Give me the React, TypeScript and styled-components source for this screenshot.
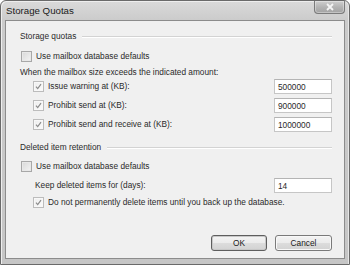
import React from "react";
import styled, { createGlobalStyle } from "styled-components";

const Global = createGlobalStyle`
  html, body { margin: 0; padding: 0; background: #ffffff; }
  body { font-family: "Liberation Sans", Arial, sans-serif; }
`;

const Window = styled.div`
  width: 350px;
  height: 265px;
  box-sizing: border-box;
  display: flex;
  flex-direction: column;
  border: 1px solid #6a6a6a;
  border-radius: 6px 6px 0 0;
  background: linear-gradient(to bottom, #dadada 0px, #cbcbcb 20px, #c6c6c6 100%);
  box-shadow: inset 1px 1px 0 #eeeeee, inset -1px 0 0 #e6e6e6;
  overflow: hidden;
`;

const TitleBar = styled.div`
  height: 19px;
  display: flex;
  align-items: flex-start;
  justify-content: space-between;
  padding: 0 4px 0 5px;
`;

const Title = styled.div`
  font-size: 9.7px;
  color: #1a1a1a;
  line-height: 19px;
`;

const CloseButton = styled.div`
  width: 31px;
  height: 13px;
  box-sizing: border-box;
  border: 1px solid #7a7a7a;
  border-top: none;
  border-radius: 0 0 4px 4px;
  background: linear-gradient(to bottom, #cfcfcf 0%, #b4b4b4 50%, #a2a2a2 100%);
  box-shadow: inset 0 0 0 1px rgba(255, 255, 255, 0.35);
  display: flex;
  align-items: center;
  justify-content: center;
`;

const Client = styled.div`
  flex: 1;
  margin: 0 4px 5px 4px;
  border: 1px solid #8c8c8c;
  background: #f0f0f0;
  display: flex;
  flex-direction: column;
  padding: 9px 12px 7px 14px;
  color: #2a2a2a;
  font-size: 8.3px;
`;

const Row = styled.div<{ $mt: number; $h: number; $indent?: number }>`
  display: flex;
  align-items: center;
  height: ${(p) => p.$h}px;
  margin-top: ${(p) => p.$mt}px;
  padding-left: ${(p) => p.$indent ?? 0}px;
  white-space: nowrap;
`;

const GroupHeader = styled(Row)`
  gap: 6px;
  &::after {
    content: "";
    flex: 1;
    height: 1px;
    background: #d3d3d3;
    box-shadow: 0 1px 0 #ffffff;
  }
`;

const Label = styled.span`
  line-height: 1;
`;

const Spacer = styled.div`
  flex: 1;
`;

const Box = styled.div<{ $checked?: boolean }>`
  width: 11px;
  height: 11px;
  box-sizing: border-box;
  flex: none;
  margin-right: 4px;
  border: 1px solid ${(p) => (p.$checked ? "#bcbcbc" : "#a8a8a8")};
  background: ${(p) =>
    p.$checked
      ? "linear-gradient(to bottom right, #eeeeee, #fbfbfb)"
      : "linear-gradient(to bottom right, #d8d8d8, #f4f4f4)"};
  box-shadow: inset 0 0 0 1px ${(p) => (p.$checked ? "#f8f8f8" : "#e8e8e8")};
  display: flex;
  align-items: center;
  justify-content: center;
`;

const TextBox = styled.div`
  width: 58px;
  height: 15px;
  box-sizing: border-box;
  border: 1px solid #c6c6c6;
  border-top-color: #b4b4b4;
  background: #ffffff;
  padding-left: 3px;
  display: flex;
  align-items: center;
  font-size: 8.3px;
  color: #2a2a2a;
`;

const Footer = styled.div`
  margin-top: auto;
  display: flex;
  justify-content: flex-end;
  gap: 8px;
`;

const Button = styled.div<{ $default?: boolean }>`
  width: ${(p) => (p.$default ? 56 : 57)}px;
  height: 16px;
  box-sizing: border-box;
  border: 1px solid ${(p) => (p.$default ? "#5e5e5e" : "#7a7a7a")};
  border-radius: 3px;
  background: linear-gradient(to bottom, #f4f4f4 0%, #ebebeb 48%, #dcdcdc 52%, #d2d2d2 100%);
  box-shadow: inset 0 0 0 1px ${(p) => (p.$default ? "#c8c8c8" : "#f8f8f8")};
  display: flex;
  align-items: center;
  justify-content: center;
  font-size: 8.3px;
  color: #1a1a1a;
`;

const Check = () => (
  <svg width="9" height="9" viewBox="0 0 9 9">
    <path d="M2 4.6 L3.7 6.6 L7 2.2" fill="none" stroke="#8c8c8c" strokeWidth="1.2" />
  </svg>
);

const CheckBox = ({ checked }: { checked?: boolean }) => (
  <Box $checked={checked}>{checked ? <Check /> : null}</Box>
);

const CloseX = () => (
  <svg width="10" height="8" viewBox="0 0 10 8">
    <path d="M2 1 L8 7 M8 1 L2 7" stroke="#f4f4f4" strokeWidth="1.8" />
  </svg>
);

const quotaRows = [
  { label: "Issue warning at (KB):", value: "500000", mt: 1 },
  { label: "Prohibit send at (KB):", value: "900000", mt: 4 },
  { label: "Prohibit send and receive at (KB):", value: "1000000", mt: 4 },
];

export default function App() {
  return (
    <>
      <Global />
      <Window>
        <TitleBar>
          <Title>Storage Quotas</Title>
          <CloseButton>
            <CloseX />
          </CloseButton>
        </TitleBar>
        <Client>
          <GroupHeader $mt={0} $h={12}>
            <Label>Storage quotas</Label>
          </GroupHeader>
          <Row $mt={7} $h={14} $indent={1}>
            <CheckBox />
            <Label>Use mailbox database defaults</Label>
          </Row>
          <Row $mt={3} $h={12}>
            <Label>When the mailbox size exceeds the indicated amount:</Label>
          </Row>
          {quotaRows.map((r) => (
            <Row key={r.label} $mt={r.mt} $h={15} $indent={13}>
              <CheckBox checked />
              <Label>{r.label}</Label>
              <Spacer />
              <TextBox>{r.value}</TextBox>
            </Row>
          ))}
          <GroupHeader $mt={9} $h={12}>
            <Label>Deleted item retention</Label>
          </GroupHeader>
          <Row $mt={6} $h={14} $indent={1}>
            <CheckBox />
            <Label>Use mailbox database defaults</Label>
          </Row>
          <Row $mt={5} $h={15} $indent={15}>
            <Label>Keep deleted items for (days):</Label>
            <Spacer />
            <TextBox>14</TextBox>
          </Row>
          <Row $mt={2} $h={14} $indent={13}>
            <CheckBox checked />
            <Label>Do not permanently delete items until you back up the database.</Label>
          </Row>
          <Footer>
            <Button $default>OK</Button>
            <Button>Cancel</Button>
          </Footer>
        </Client>
      </Window>
    </>
  );
}
